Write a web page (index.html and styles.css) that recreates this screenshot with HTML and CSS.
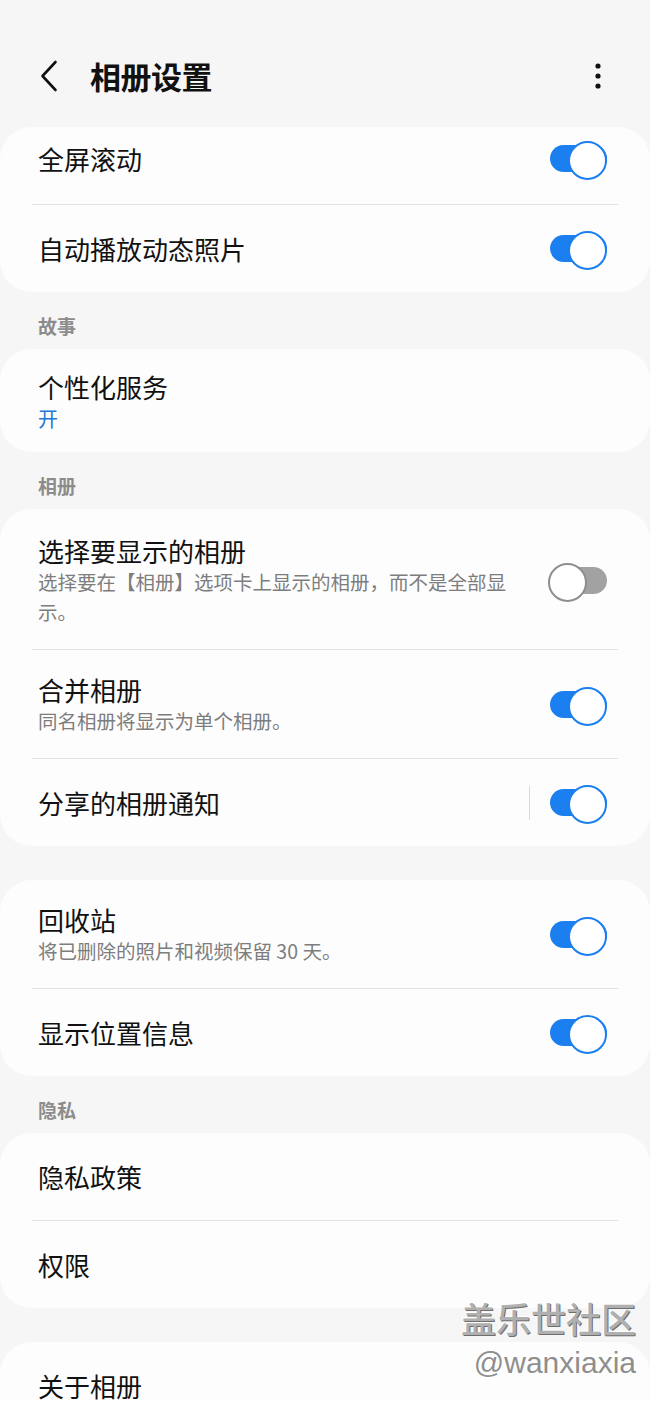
FILE: index.html
```html
<!DOCTYPE html>
<html lang="zh-CN">
<head>
<meta charset="utf-8">
<title>相册设置</title>
<link rel="stylesheet" href="styles.css">
</head>
<body>
<header class="appbar">
  <svg class="back" width="18" height="32" viewBox="0 0 18 32" aria-hidden="true">
    <path d="M15.5 2 L2.5 16 L15.5 30" fill="none" stroke="#111" stroke-width="2.6" stroke-linecap="round" stroke-linejoin="round"/>
  </svg>
  <h1 class="appbar-title">相册设置</h1>
  <svg class="kebab" width="8" height="28" viewBox="0 0 8 28" aria-hidden="true">
    <circle cx="4" cy="4" r="2.6" fill="#111"/>
    <circle cx="4" cy="14" r="2.6" fill="#111"/>
    <circle cx="4" cy="24" r="2.6" fill="#111"/>
  </svg>
</header>

<main class="list">
  <section class="card card--first">
    <div class="row row--clipped">
      <div class="row-text"><div class="row-title">全屏滚动</div></div>
      <span class="switch switch--on"></span>
    </div>
    <div class="divider"></div>
    <div class="row">
      <div class="row-text"><div class="row-title">自动播放动态照片</div></div>
      <span class="switch switch--on"></span>
    </div>
  </section>

  <div class="section-label">故事</div>
  <section class="card">
    <div class="row row--sub row--compact">
      <div class="row-text">
        <div class="row-title">个性化服务</div>
        <div class="row-sub row-sub--accent">开</div>
      </div>
    </div>
  </section>

  <div class="section-label">相册</div>
  <section class="card">
    <div class="row row--sub row--tall">
      <div class="row-text">
        <div class="row-title">选择要显示的相册</div>
        <div class="row-sub">选择要在【相册】选项卡上显示的相册，而不是全部显示。</div>
      </div>
      <span class="switch switch--off"></span>
    </div>
    <div class="divider"></div>
    <div class="row row--sub">
      <div class="row-text">
        <div class="row-title">合并相册</div>
        <div class="row-sub">同名相册将显示为单个相册。</div>
      </div>
      <span class="switch switch--on"></span>
    </div>
    <div class="divider"></div>
    <div class="row">
      <div class="row-text"><div class="row-title">分享的相册通知</div></div>
      <span class="vsep"></span>
      <span class="switch switch--on"></span>
    </div>
  </section>

  <section class="card">
    <div class="row row--sub">
      <div class="row-text">
        <div class="row-title">回收站</div>
        <div class="row-sub">将已删除的照片和视频保留 30 天。</div>
      </div>
      <span class="switch switch--on"></span>
    </div>
    <div class="divider"></div>
    <div class="row">
      <div class="row-text"><div class="row-title">显示位置信息</div></div>
      <span class="switch switch--on"></span>
    </div>
  </section>

  <div class="section-label">隐私</div>
  <section class="card">
    <div class="row">
      <div class="row-text"><div class="row-title">隐私政策</div></div>
    </div>
    <div class="divider"></div>
    <div class="row">
      <div class="row-text"><div class="row-title">权限</div></div>
    </div>
  </section>

  <section class="card">
    <div class="row">
      <div class="row-text"><div class="row-title">关于相册</div></div>
    </div>
  </section>
</main>

<div class="watermark">
  <div class="wm-brand">盖乐世社区</div>
  <div class="wm-user">@wanxiaxia</div>
</div>
</body>
</html>
```

FILE: styles.css
```css
* { box-sizing: border-box; }

html, body {
  margin: 0;
  padding: 0;
}

body {
  position: relative;
  background: #f6f6f6;
  font-family: "Noto Sans CJK SC", "Noto Sans", sans-serif;
  color: #111;
  overflow: hidden;
  height: 1401px;
}

/* ---------- App bar ---------- */
.appbar {
  display: flex;
  align-items: center;
  height: 48px;
  margin-top: 52px;
  padding: 0 0 0 40px;
}

.back {
  flex: none;
  display: block;
}

.appbar-title {
  margin: 0 0 0 32px;
  font-size: 31px;
  line-height: 48px;
  font-weight: 700;
  letter-spacing: -0.5px;
  flex: 1;
}

.kebab {
  flex: none;
  display: block;
  margin-right: 48px;
}

/* ---------- List ---------- */
.list {
  display: flex;
  flex-direction: column;
}

.card {
  background: #fdfdfd;
  border-radius: 32px;
}

.card--first {
  margin-top: 27px;
}

.card + .card {
  margin-top: 34px;
}

.section-label {
  padding: 22px 38px 11px;
  font-size: 19px;
  line-height: 24px;
  font-weight: 700;
  color: #8c8c8c;
}

.row {
  display: flex;
  align-items: center;
  min-height: 87px;
  padding: 0 43px 0 38px;
}

.row--clipped {
  min-height: 77px;
  padding-bottom: 14px;
}

.row--sub {
  padding-top: 23px;
  padding-bottom: 22px;
}

.row--tall {
  padding-top: 25px;
  padding-bottom: 22px;
}

.row--compact {
  padding-top: 21px;
  padding-bottom: 18px;
}

.row-text {
  flex: 1;
  min-width: 0;
  margin-right: 30px;
}

.row-title {
  font-size: 26px;
  line-height: 33px;
  color: #111;
}

.row-sub {
  font-size: 19.5px;
  line-height: 30px;
  color: #7d7d7d;
}

.row-sub--accent {
  color: #2276d4;
  font-size: 20px;
  line-height: 31px;
}

.divider {
  height: 1px;
  margin: 0 32px;
  background: #e3e3e3;
}

.vsep {
  flex: none;
  width: 1px;
  height: 34px;
  background: #dadada;
  margin-right: 18px;
}

/* ---------- Switch ---------- */
.switch {
  flex: none;
  position: relative;
  width: 59px;
  height: 35px;
}

.switch::before {
  content: "";
  position: absolute;
  left: 2px;
  right: 0;
  top: 4px;
  height: 27px;
  border-radius: 14px;
}

.switch::after {
  content: "";
  position: absolute;
  top: 0;
  width: 35px;
  height: 35px;
  border-radius: 50%;
  background: #fff;
}

.switch--on::before { background: #1b7ff0; }
.switch--on::after {
  right: 0;
  border: 2px solid #1b7ff0;
}

.switch--off::before { background: #a2a2a2; }
.switch--off::after {
  left: 0;
  border: 2px solid #8e8e8e;
}

/* ---------- Watermark overlay ---------- */
.watermark {
  position: absolute;
  right: 14px;
  top: 1296px;
  text-align: right;
  pointer-events: none;
}

.wm-brand {
  font-family: "Noto Sans CJK SC", sans-serif;
  font-size: 35px;
  line-height: 44px;
  font-weight: 500;
  color: #b0b0b0;
  text-shadow: 1px 1px 0 #6e6e6e, -1px -1px 0 #ffffff;
}

.wm-user {
  font-family: "Liberation Sans", Arial, sans-serif;
  font-size: 30px;
  line-height: 46px;
  color: #8e8e8e;
  text-shadow: 1px 1px 0 #ffffff, -1px -1px 0 #ffffff;
}
```
